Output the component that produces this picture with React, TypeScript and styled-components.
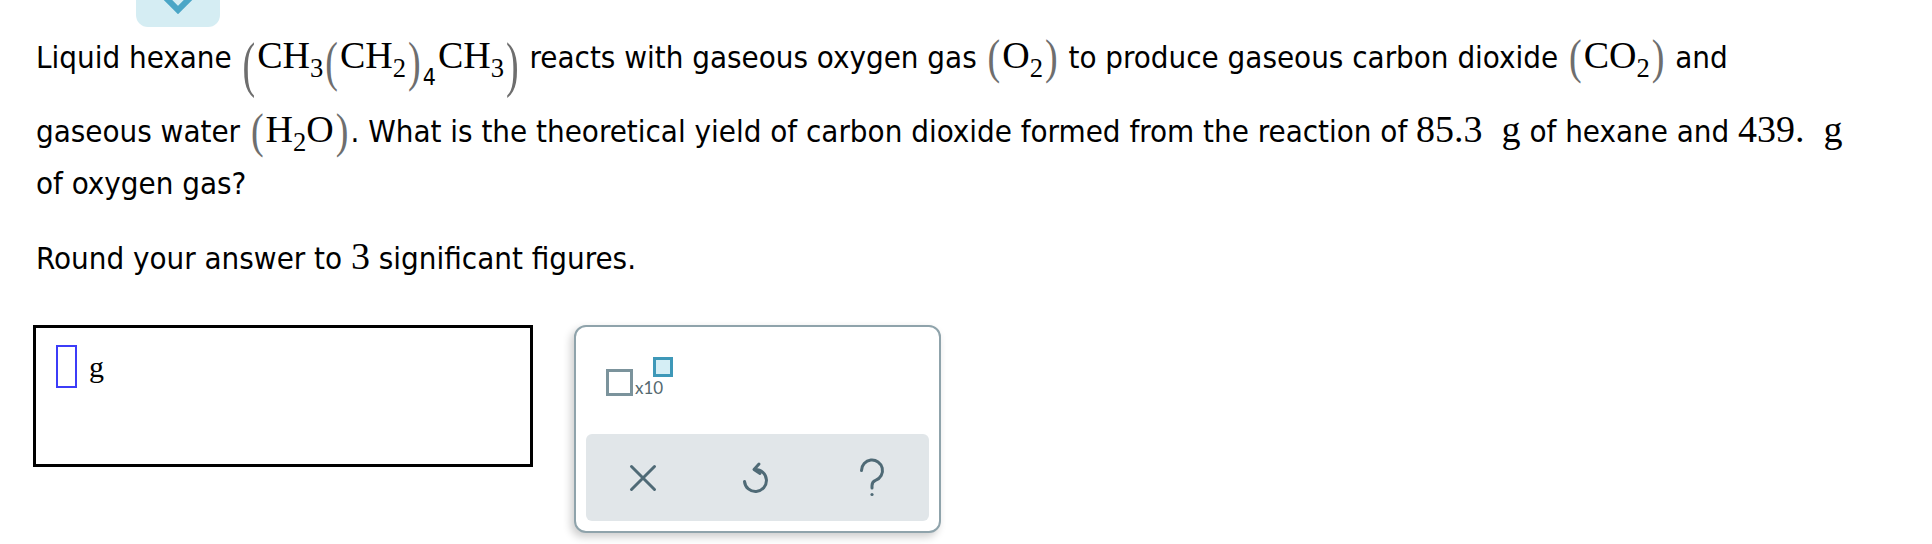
import React from 'react'
import styled, { createGlobalStyle } from 'styled-components'

const GlobalStyle = createGlobalStyle`
    body {
        margin: 0;
        background: #fff;
        font-family: "DejaVu Sans Condensed", "DejaVu Sans", sans-serif;
        color: #000;
    }
`

const Page = styled.div`
    width: 1932px;
    height: 544px;
    overflow: hidden;
`

const TopTab = styled.div`
    margin-left: 136px;
    width: 84px;
    height: 27px;
    background: #d5edf3;
    border-radius: 0 0 12px 12px;
    display: flex;
    justify-content: center;
`

const Question = styled.div`
    padding-left: 36px;
    font-size: 31px;
`

const Line = styled.div<{ $h: number; $mt?: number }>`
    height: ${(p) => p.$h}px;
    line-height: ${(p) => p.$h}px;
    margin-top: ${(p) => p.$mt ?? 0}px;
    white-space: nowrap;
`

const Math = styled.span`
    font-family: "Liberation Serif", "Times New Roman", serif;
    font-size: 38px;
    line-height: 1;
`

const Sub = styled.span<{ $drop?: number }>`
    font-size: 0.7em;
    line-height: 1;
    vertical-align: -${(p) => p.$drop ?? 0.34}em;
`

const SansSub = styled.span`
    font-family: "DejaVu Sans Condensed", "DejaVu Sans", sans-serif;
    font-size: 23px;
    line-height: 1;
    vertical-align: -0.75em;
    margin-right: 2px;
`

const Paren = styled.span<{ $scale: number; $shift?: number }>`
    display: inline-block;
    color: #6e6e6e;
    line-height: 1;
    transform: translateY(${(p) => p.$shift ?? 0}px) scaleY(${(p) => p.$scale});
    margin: 0 2px;
`

const AnswerRow = styled.div`
    display: flex;
    align-items: flex-start;
    gap: 41px;
    margin-top: 42px;
    margin-left: 33px;
`

const AnswerBox = styled.div`
    box-sizing: border-box;
    width: 500px;
    height: 142px;
    border: 3px solid #000;
    display: flex;
    align-items: flex-start;
    padding: 17px 0 0 20px;
`

const Cursor = styled.div`
    box-sizing: border-box;
    width: 21px;
    height: 43px;
    border: 2px solid #3c3cf8;
`

const Unit = styled.span`
    font-family: "Liberation Serif", "Times New Roman", serif;
    font-size: 30px;
    line-height: 1;
    margin: 7px 0 0 12px;
`

const Panel = styled.div`
    box-sizing: border-box;
    width: 367px;
    height: 208px;
    border: 2px solid #8fa3ab;
    border-radius: 12px;
    padding: 10px;
    background: #fff;
    box-shadow: -3px 4px 9px rgba(0, 0, 0, 0.2);
    display: flex;
    flex-direction: column;
`

const PaletteArea = styled.div`
    height: 97px;
    padding: 20px 0 0 20px;
    box-sizing: border-box;
`

const SciButton = styled.div`
    display: inline-flex;
    align-items: flex-end;
`

const EmptyBox = styled.div<{ $size: number; $color: string; $fill: string }>`
    box-sizing: border-box;
    width: ${(p) => p.$size}px;
    height: ${(p) => p.$size}px;
    border: 3px solid ${(p) => p.$color};
    background: ${(p) => p.$fill};
`

const ExpColumn = styled.div`
    display: flex;
    flex-direction: column;
    margin-left: 2px;
`

const ExpText = styled.span`
    font-family: Lato, "Open Sans", sans-serif;
    font-size: 17px;
    line-height: 16px;
    color: #55696f;
    margin-top: 3px;
`

const Toolbar = styled.div`
    flex: 1;
    background: #e1e6e9;
    border-radius: 6px;
    display: grid;
    grid-template-columns: repeat(3, 1fr);
    align-items: center;
    justify-items: center;
`

const ToolIcon = styled.svg`
    color: #4f6a76;
    fill: none;
    stroke: currentColor;
    stroke-linecap: round;
    stroke-linejoin: round;
`

export default function App() {
    return (
        <Page>
            <GlobalStyle />
            <TopTab>
                <svg width="32" height="14" viewBox="0 0 32 14">
                    <polyline
                        points="2,-4 16,10 30,-4"
                        fill="none"
                        stroke="#4ba6c6"
                        strokeWidth="6"
                    />
                </svg>
            </TopTab>
            <Question>
                <Line $h={61}>
                    Liquid hexane{' '}
                    <Math>
                        <Paren $scale={1.62} $shift={9}>(</Paren>CH<Sub>3</Sub>
                        <Paren $scale={1.42} $shift={7}>(</Paren>CH<Sub>2</Sub>
                        <Paren $scale={1.42} $shift={7}>)</Paren>
                        <SansSub>4</SansSub>CH<Sub>3</Sub>
                        <Paren $scale={1.62} $shift={9}>)</Paren>
                    </Math>{' '}
                    reacts with gaseous oxygen gas{' '}
                    <Math>
                        <Paren $scale={1.25} $shift={2}>(</Paren>O<Sub>2</Sub>
                        <Paren $scale={1.25} $shift={2}>)</Paren>
                    </Math>{' '}
                    to produce gaseous carbon dioxide{' '}
                    <Math>
                        <Paren $scale={1.25} $shift={2}>(</Paren>CO<Sub>2</Sub>
                        <Paren $scale={1.25} $shift={2}>)</Paren>
                    </Math>{' '}
                    and
                </Line>
                <Line $h={52} $mt={17}>
                    gaseous water{' '}
                    <Math>
                        <Paren $scale={1.25} $shift={2}>(</Paren>H<Sub>2</Sub>O
                        <Paren $scale={1.25} $shift={2}>)</Paren>
                    </Math>
                    . What is the theoretical yield of carbon dioxide formed from the
                    reaction of <Math>85.3&nbsp; g</Math> of hexane and{' '}
                    <Math>439.&nbsp; g</Math>
                </Line>
                <Line $h={52}>of oxygen gas?</Line>
                <Line $h={50} $mt={24}>
                    Round your answer to <Math>3</Math> significant figures.
                </Line>
            </Question>
            <AnswerRow>
                <AnswerBox>
                    <Cursor />
                    <Unit>g</Unit>
                </AnswerBox>
                <Panel>
                    <PaletteArea>
                        <SciButton>
                            <EmptyBox $size={27} $color="#7b939c" $fill="#fff" />
                            <ExpColumn>
                                <EmptyBox
                                    $size={20}
                                    $color="#3e98b8"
                                    $fill="#d5eef5"
                                    style={{ marginLeft: 18 }}
                                />
                                <ExpText>x10</ExpText>
                            </ExpColumn>
                        </SciButton>
                    </PaletteArea>
                    <Toolbar>
                        <ToolIcon width="28" height="28" viewBox="0 0 28 28" strokeWidth="3">
                            <path d="M2.5 2.5 25.5 25.5M25.5 2.5 2.5 25.5" />
                        </ToolIcon>
                        <ToolIcon width="30" height="34" viewBox="0 0 30 34" strokeWidth="3">
                            <path d="M13 8.5a11 11 0 1 1 -10.5 12" />
                            <path d="M17 3 12 8.5l6 4" />
                        </ToolIcon>
                        <ToolIcon width="26" height="40" viewBox="0 0 26 40" strokeWidth="3">
                            <path d="M2.5 12.5a10.5 10.5 0 1 1 14 9.9c-2.5 1-3.5 2.8-3.5 5.3v2.3" />
                            <circle cx="13" cy="36.5" r="1.6" fill="currentColor" stroke="none" />
                        </ToolIcon>
                    </Toolbar>
                </Panel>
            </AnswerRow>
        </Page>
    )
}
